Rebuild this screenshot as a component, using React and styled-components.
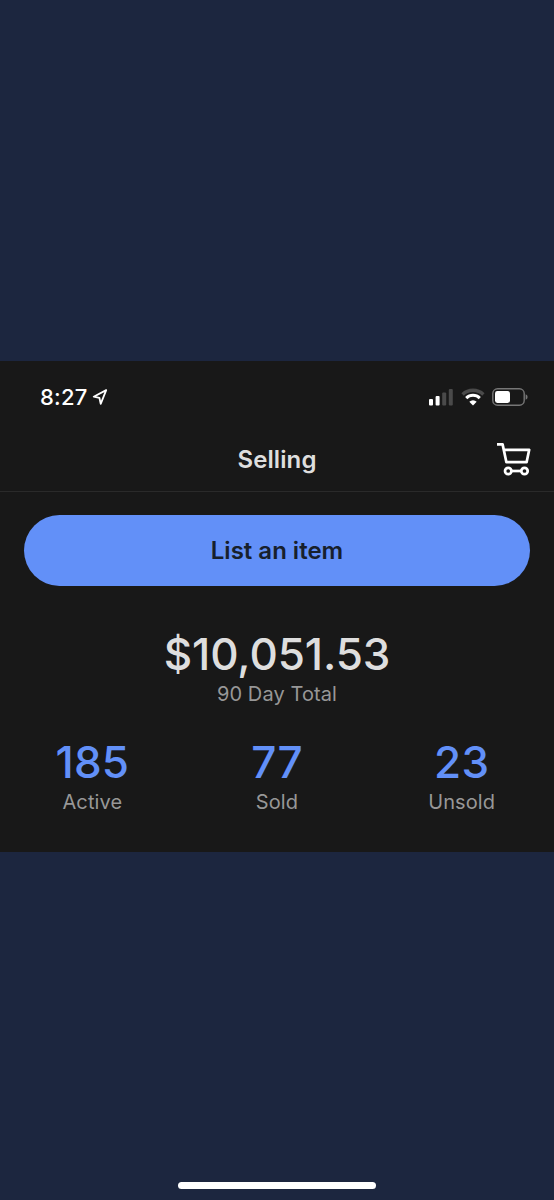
import React from "react";
import styled, { createGlobalStyle } from "styled-components";

const stats = [
    { id: 1, value: "185", label: "Active" },
    { id: 2, value: "77", label: "Sold" },
    { id: 3, value: "23", label: "Unsold" },
];

const GlobalStyle = createGlobalStyle`
    * {
        box-sizing: border-box;
    }

    body {
        margin: 0;
        background-color: #1c263f;
        font-family: Inter, "Liberation Sans", sans-serif;
    }
`;

const Container = styled.div`
    width: 100%;
    height: 100vh;
    min-height: 1200px;
    display: flex;
    flex-direction: column;
    background-color: #1c263f;
`;

const Panel = styled.main`
    height: 491px;
    margin-top: 361px;
    background-color: #181818;
`;

const StatusBar = styled.div`
    height: 70px;
    padding: 1px 26px 0 40px;
    display: flex;
    align-items: center;
    justify-content: space-between;
`;

const Clock = styled.div`
    display: flex;
    align-items: center;
    gap: 4px;
    color: #fff;
`;

const Time = styled.span`
    width: 48px;
    font-size: 22px;
    line-height: 28px;
    font-weight: 500;
    letter-spacing: 0.2px;
    white-space: nowrap;
`;

const Indicators = styled.div`
    display: flex;
    align-items: center;
    gap: 7.5px;
`;

const Header = styled.header`
    height: 61px;
    padding: 0 23px;
    display: grid;
    grid-template-columns: 1fr auto 1fr;
    align-items: center;
    border-bottom: 1px solid #2a2a2a;
`;

const Title = styled.h1`
    grid-column: 2;
    margin: 0;
    padding-bottom: 3px;
    color: #dedede;
    font-size: 24px;
    line-height: 30px;
    font-weight: 600;
    letter-spacing: 0.1px;
`;

const CartButton = styled.button`
    justify-self: end;
    margin-bottom: 4px;
    padding: 0;
    display: flex;
    border: none;
    background-color: transparent;
    color: #fff;
    cursor: pointer;
`;

const ListButton = styled.button`
    width: calc(100% - 48px);
    height: 71px;
    margin: 23px 24px 0;
    padding: 0;
    display: block;
    border: none;
    border-radius: 36px;
    background-color: #6290f8;
    color: #17202c;
    font-family: inherit;
    font-size: 24px;
    font-weight: 600;
    cursor: pointer;
`;

const Summary = styled.section`
    margin-top: 41px;
    text-align: center;
`;

const Stats = styled.section`
    margin-top: 28px;
    display: grid;
    grid-template-columns: repeat(3, 1fr);
    text-align: center;
`;

const Stat = styled.div`
    min-width: 0;
`;

const Amount = styled.div`
    color: ${(props) => props.color};
    font-size: 44px;
    line-height: 54px;
    font-weight: 450;
    letter-spacing: ${(props) => props.$spacing};
`;

const Label = styled.div`
    color: #979797;
    font-size: 20px;
    line-height: 26px;
    letter-spacing: 0.1px;
`;

const Footer = styled.footer`
    margin-top: auto;
    padding-bottom: 11px;
    display: flex;
    justify-content: center;
`;

const HomeIndicator = styled.div`
    width: 198px;
    height: 7px;
    border-radius: 4px;
    background-color: #fff;
`;

const LocationIcon = () => (
    <svg width="16" height="18" viewBox="0 0 16 18" fill="none">
        <path
            d="M14.2 2.1 1.7 8.7 7.4 9.8 8.7 15.8Z"
            stroke="currentColor"
            strokeWidth="1.8"
            strokeLinejoin="round"
        />
    </svg>
);

const SignalIcon = () => (
    <svg width="24" height="18" viewBox="0 0 24 18">
        <rect x="0" y="11" width="4" height="6.5" rx="1" fill="#fff" />
        <rect x="6.6" y="8" width="4" height="9.5" rx="1" fill="#fff" />
        <rect x="13.2" y="4.5" width="4" height="13" rx="1" fill="#4a4a4a" />
        <rect x="19.8" y="1" width="4" height="16.5" rx="1" fill="#4a4a4a" />
    </svg>
);

const WifiIcon = () => (
    <svg width="24" height="18" viewBox="0 0 24 18" fill="none">
        <path d="M1.6 6.4a15 15 0 0 1 20.8 0" stroke="#4a4a4a" strokeWidth="3.4" />
        <path d="M5.2 10.1a9.8 9.8 0 0 1 13.6 0" stroke="#fff" strokeWidth="3" />
        <path d="M8.3 13.8a5.3 5.3 0 0 1 7.4 0L12 17.5Z" fill="#fff" />
    </svg>
);

const BatteryIcon = () => (
    <svg width="36" height="18" viewBox="0 0 36 18" fill="none">
        <rect x="0.8" y="0.8" width="31.4" height="16.4" rx="4.8" stroke="#777" strokeWidth="1.4" />
        <rect x="3" y="3" width="15" height="12" rx="2.4" fill="#fff" />
        <path d="M33.6 6.3q2 0.7 2 2.7t-2 2.7Z" fill="#777" />
    </svg>
);

const CartIcon = () => (
    <svg width="34" height="34" viewBox="0 0 34 34" fill="none" stroke="currentColor" strokeWidth="2.7">
        <path
            d="M0 2.4H5.6L9.4 20.2H29.6L32.2 7.8H6.8"
            strokeLinejoin="round"
        />
        <circle cx="11.2" cy="29" r="3.2" />
        <circle cx="27.5" cy="29" r="3.2" />
        <path d="M14.4 29H24.3" />
    </svg>
);

const App = () => {
    return (
        <>
            <GlobalStyle />
            <Container>
                <Panel>
                    <StatusBar>
                        <Clock>
                            <Time>8:27</Time>
                            <LocationIcon />
                        </Clock>
                        <Indicators>
                            <SignalIcon />
                            <WifiIcon />
                            <BatteryIcon />
                        </Indicators>
                    </StatusBar>
                    <Header>
                        <Title>Selling</Title>
                        <CartButton aria-label="Cart">
                            <CartIcon />
                        </CartButton>
                    </Header>
                    <ListButton>List an item</ListButton>
                    <Summary>
                        <Amount color="#dedede" $spacing="-0.1px">
                            $10,051.53
                        </Amount>
                        <Label>90 Day Total</Label>
                    </Summary>
                    <Stats>
                        {stats.map((item) => (
                            <Stat key={item.id}>
                                <Amount color="#6290f8" $spacing="0.2px">
                                    {item.value}
                                </Amount>
                                <Label>{item.label}</Label>
                            </Stat>
                        ))}
                    </Stats>
                </Panel>
                <Footer>
                    <HomeIndicator />
                </Footer>
            </Container>
        </>
    );
};

export default App;
